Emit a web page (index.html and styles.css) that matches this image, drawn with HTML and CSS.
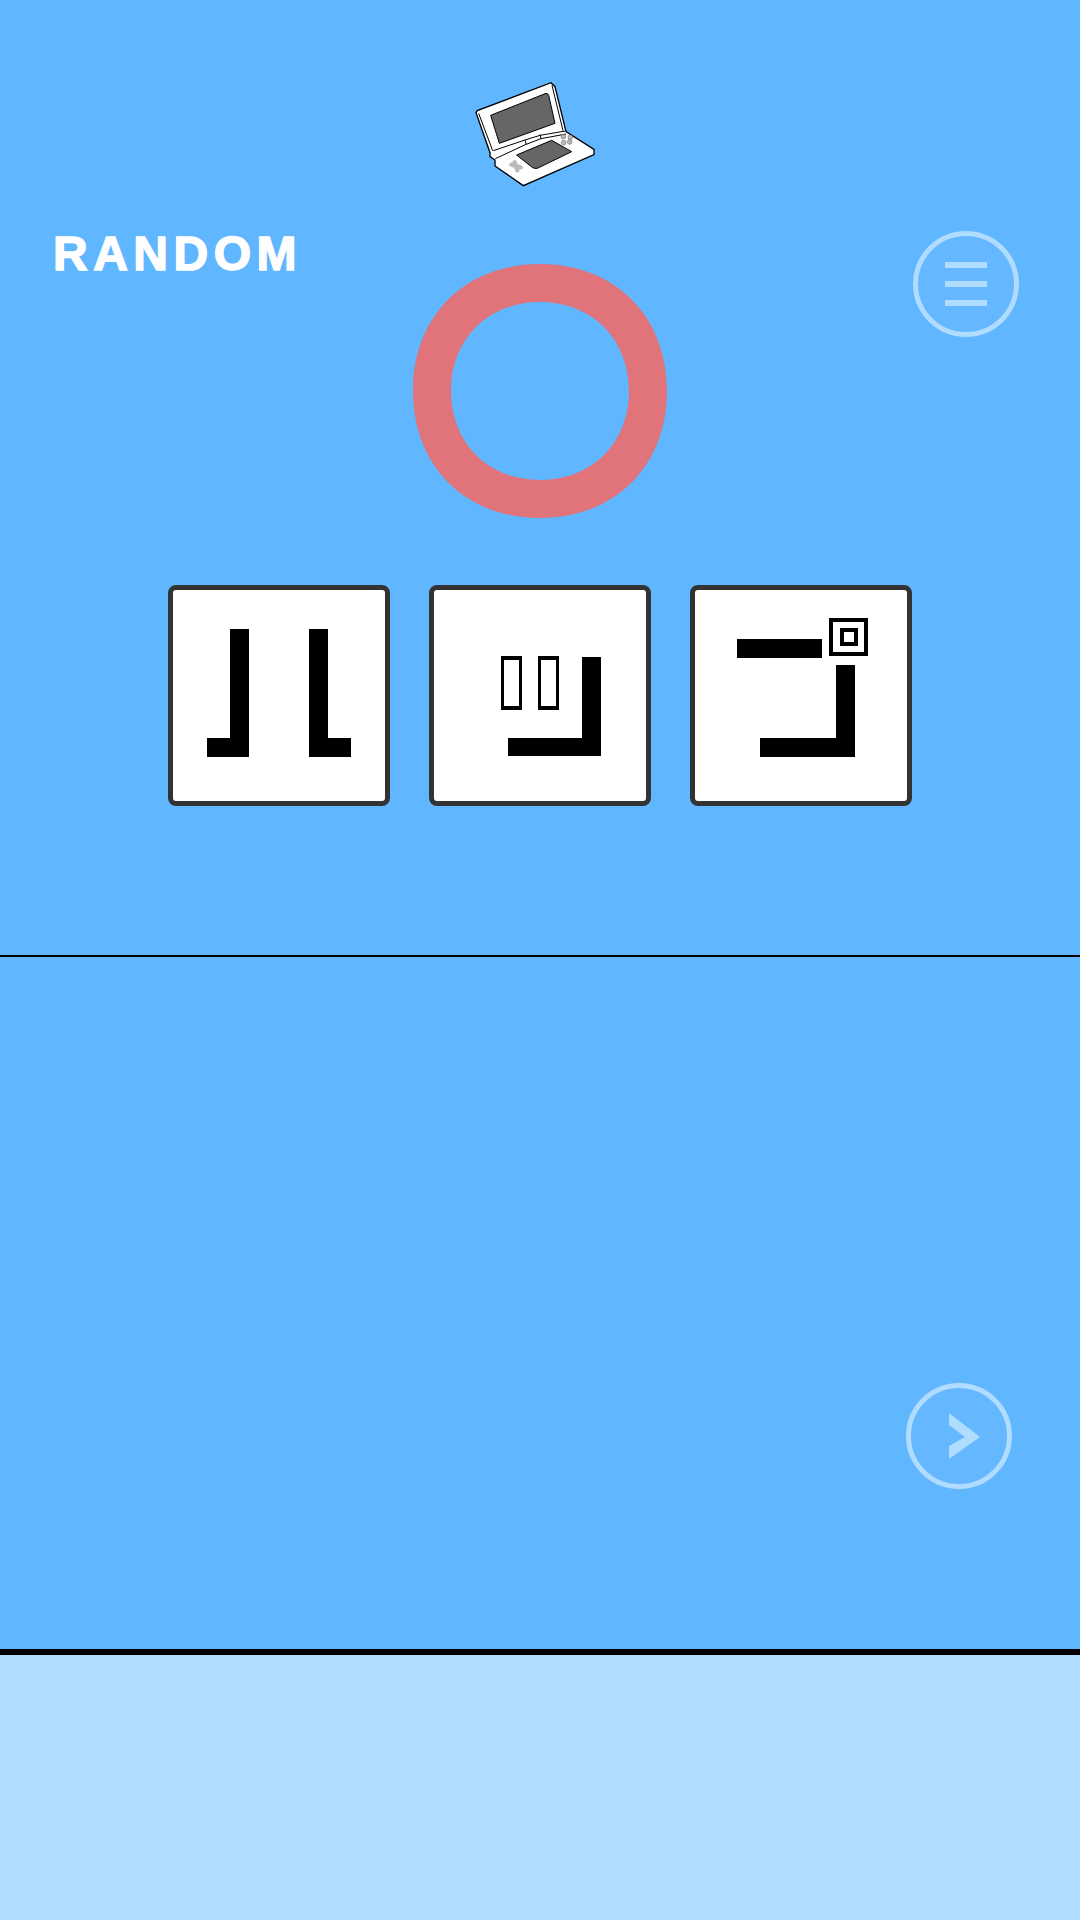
FILE: index.html
```html
<!DOCTYPE html>
<html lang="en">

<head>
    <meta charset="UTF-8">
    <meta name="viewport" content="width=device-width, initial-scale=1.0">
    <title>Random</title>
    <link rel="stylesheet" href="styles.css">
</head>

<body>
    <div id="game">
        <section class="top">
            <svg class="console" viewBox="0 0 600 420">
                <path class="ds-body" d="M150 278V290L165 300V318L250 377 462 284V268L378 215 345 80 333 68 112 152 108 158Z" />
                <path class="ds-line" d="M116 160 158 272M336 76 369 212M160 272 255 240 300 226 376 213M166 296 256 254 303 236 378 222M255 240 259 254M300 224 303 236" />
                <path class="ds-screen" d="M152 166 318 100Q324 100 326 106L345 190 178 250Z" />
                <path class="ds-screen" d="M230 285 335 241 395 275 292 325Q285 326 278 323Z" />
                <path class="ds-cross" d="M214 314 242 322M224 307 232 331" />
                <circle class="ds-pad" cx="370" cy="230" r="7" />
                <circle class="ds-pad" cx="391" cy="232" r="7" />
                <circle class="ds-pad" cx="371" cy="248" r="7" />
                <circle class="ds-pad" cx="389" cy="246" r="7" />
            </svg>
            <div class="head">
                <div class="label">RANDOM</div>
                <svg class="ring" viewBox="0 0 254 254">
                    <path fill-rule="evenodd" d="M127 0C202 0 254 52 254 127S202 254 127 254 0 202 0 127 52 0 127 0ZM127 38C75 38 38 75 38 127S75 216 127 216 216 179 216 127 179 38 127 38Z" />
                </svg>
                <button class="round menu">
                    <span></span>
                    <span></span>
                    <span></span>
                </button>
            </div>
            <div class="cards">
                <div class="card">
                    <svg class="glyph" viewBox="0 0 212 211">
                        <path d="M57 39h19v128H34v-19h23z" />
                        <path d="M136 39h19v109h23v19h-42z" />
                    </svg>
                </div>
                <div class="card">
                    <svg class="glyph" viewBox="0 0 212 211">
                        <path fill-rule="evenodd" d="M67 66h21v54H67zM70 70v46h15V70z" />
                        <path fill-rule="evenodd" d="M104 66h21v54h-21zM107 70v46h15V70z" />
                        <path d="M148 67h19v99H74v-18h74z" />
                    </svg>
                </div>
                <div class="card">
                    <svg class="glyph" viewBox="0 0 212 211">
                        <rect x="42" y="49" width="85" height="19" />
                        <rect class="hollow" x="136" y="30" width="35" height="34" />
                        <rect class="hollow" x="147" y="40" width="14" height="14" />
                        <path d="M141 75h19v92H65v-19h76z" />
                    </svg>
                </div>
            </div>
        </section>

        <section class="middle">
            <button class="round next">
                <svg viewBox="0 0 96 96">
                    <path d="M38 25 69 49 38 71V58L54 49 38 37Z" />
                </svg>
            </button>
        </section>

        <section class="bottom"></section>
    </div>
</body>

</html>
```

FILE: styles.css
```css
* {
    box-sizing: border-box;
}

body {
    margin: 0;
    background-color: #60b6ff;
}

#game {
    height: 1920px;
    display: flex;
    flex-direction: column;
}

.top {
    height: 957px;
    padding-top: 60px;
    border-bottom: 2px solid #000;
}

.console {
    display: block;
    width: 200px;
    height: 140px;
    margin: 0 auto;
}

.ds-body {
    fill: #fff;
    stroke: #000;
    stroke-width: 4;
}

.ds-line {
    fill: none;
    stroke: #000;
    stroke-width: 3;
}

.ds-screen {
    fill: #666;
    stroke: #000;
    stroke-width: 3;
}

.ds-cross {
    fill: none;
    stroke: #bbb;
    stroke-width: 13;
    stroke-linecap: round;
}

.ds-pad {
    fill: #bbb;
    stroke: #555;
    stroke-width: 1.5;
}

.head {
    display: grid;
    grid-template-columns: 1fr 254px 1fr;
    margin-top: 31px;
}

.label {
    padding-left: 53px;
    font-family: "Liberation Sans", sans-serif;
    font-size: 48px;
    font-weight: bold;
    line-height: 46px;
    letter-spacing: 5.5px;
    color: #fff;
    -webkit-text-stroke: 1.5px #fff;
}

.ring {
    display: block;
    width: 254px;
    height: 254px;
    margin-top: 33px;
    fill: #e0747a;
}

.round {
    display: block;
    width: 106px;
    height: 106px;
    padding: 0;
    border: 5px solid #b0dcff;
    border-radius: 50%;
    background-color: rgba(255, 255, 255, 0.03);
}

.menu {
    justify-self: end;
    margin-right: 61px;
    display: flex;
    flex-direction: column;
    align-items: center;
    gap: 13px;
    padding-top: 26px;
}

.menu span {
    display: block;
    width: 42px;
    height: 6px;
    background-color: #b0dcff;
}

.cards {
    display: flex;
    justify-content: center;
    gap: 39px;
    margin-top: 67px;
}

.card {
    width: 222px;
    height: 221px;
    border: 5px solid #333;
    border-radius: 8px;
    background-color: #fff;
}

.glyph {
    display: block;
    width: 212px;
    height: 211px;
    shape-rendering: crispEdges;
}

.hollow {
    fill: none;
    stroke: #000;
    stroke-width: 4;
}

.middle {
    height: 698px;
    display: flex;
    justify-content: flex-end;
    padding-top: 426px;
    padding-right: 68px;
    border-bottom: 6px solid #000;
}

.next svg {
    display: block;
    width: 96px;
    height: 96px;
    fill: #b0dcff;
}

.bottom {
    flex: 1;
    background-color: #b0dcff;
}
```
